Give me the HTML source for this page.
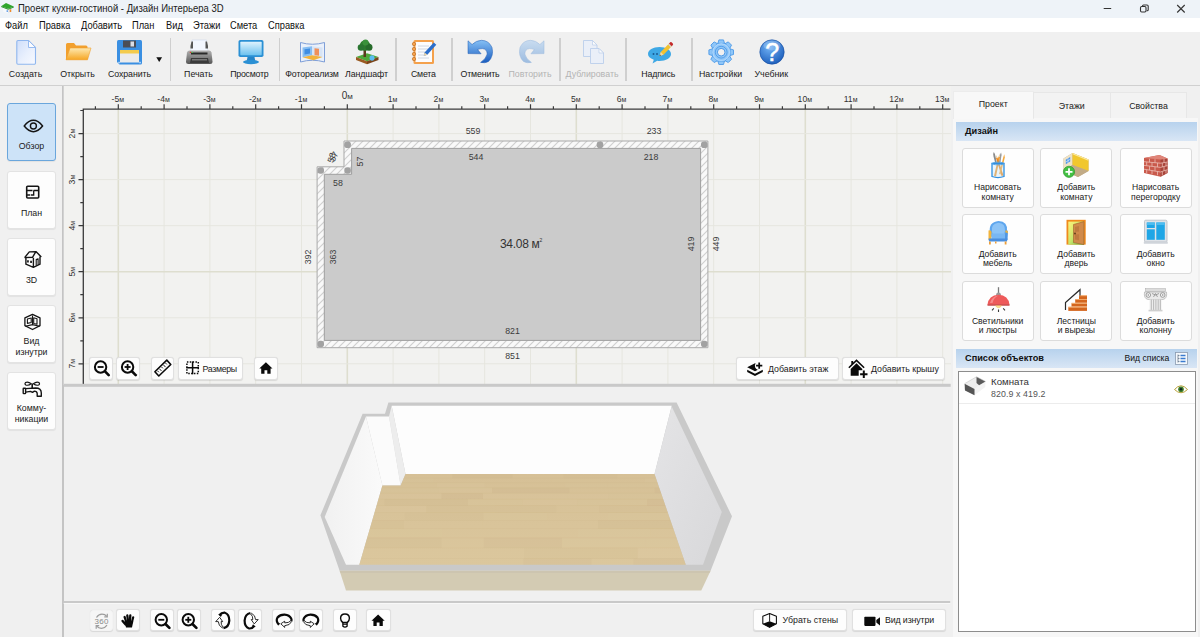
<!DOCTYPE html>
<html lang="ru"><head><meta charset="utf-8"><title>Дизайн Интерьера 3D</title>
<style>
html,body{margin:0;padding:0}
body{width:1200px;height:637px;overflow:hidden;position:relative;background:#f0f0f0;font-family:"Liberation Sans","DejaVu Sans",sans-serif;color:#1a1a1a;font-size:9px}
.abs{position:absolute}
#title{position:absolute;left:0;top:0;width:1200px;height:18px;background:#eef3f8}
#title .t{position:absolute;left:18px;top:2.800px;font-size:9.5px;line-height:12px;transform:scaleY(1.07);color:#222;white-space:nowrap}
#menu{position:absolute;left:0;top:17.700px;width:1200px;height:14.300px;background:#fff}
#menu span{position:absolute;top:1.900px;font-size:9.3px;line-height:12px;transform:scaleY(1.15);color:#111;white-space:nowrap}
#toolbar{position:absolute;left:0;top:32px;width:1200px;height:52.500px;background:#f0f0f0;border-bottom:1px solid #d0d0d0}
.tb{position:absolute;top:36.500px;width:70px;margin-left:-35px;text-align:center;font-size:8.8px;line-height:10px;color:#1a1a1a;white-space:nowrap}
.tb.dis{color:#b4b4b4}
.ico{position:absolute;top:5px;width:30px;height:30px;margin-left:-15px}
.sep{position:absolute;top:5.500px;width:1.5px;height:43px;background:#cfcfcf}

.sb{position:absolute;left:7px;width:47px;height:56px;border:1px solid #e3e3e3;border-radius:3px;background:#fdfdfd;box-shadow:0 1px 1px rgba(0,0,0,.06)}
.sb.act{background:#cde3f8;border-color:#6aa6dc}
.sb svg{position:absolute;left:50%;margin-left:-12px;width:24px;height:24px}
.sb .l{position:absolute;left:-4px;right:-4px;text-align:center;font-size:8.8px;line-height:11px;color:#1a1a1a}
#sideline{position:absolute;left:62.200px;top:86px;width:1.500px;height:551px;background:#c4c4c4}

#right{position:absolute;left:953.300px;top:117.500px;width:245px;height:519.500px;background:#f7f7f7}
.tab{position:absolute;top:92px;height:26px;background:#f3f3f3;border:1px solid #e7e7e7;border-bottom:none;box-sizing:border-box;text-align:center;font-size:8.8px;line-height:27px;color:#222}
.tab.act{top:90.500px;height:28px;background:#f8f8f8;border-color:#ececec;line-height:25px}
.hdr{position:absolute;left:956px;width:241.200px;height:19px;background:linear-gradient(#b7d2ed,#d9e6f5);font-weight:bold;font-size:9.2px;line-height:19px;color:#111}
.hdr span{position:absolute;left:9px;top:0}
.pb{position:absolute;width:70.300px;height:58px;border:1px solid #dcdcdc;border-radius:3px;background:#fefefe}
.pb .l{position:absolute;left:-3px;right:-3px;top:34.500px;text-align:center;font-size:8.6px;line-height:9.800px;color:#1a1a1a}
.pb svg{position:absolute;left:50%;margin-left:-15px;top:1.500px;width:30px;height:30px}
#list{position:absolute;left:958px;top:371px;width:235.500px;height:259px;border:1px solid #8d8d8d;background:#fff}

.btn{position:absolute;border:1px solid #e0e0e0;box-shadow:0 .6px 1px rgba(0,0,0,.10);border-radius:3px;background:#fdfdfd;box-sizing:content-box;font-size:8.800px;color:#1a1a1a;white-space:nowrap}
.btn svg{position:absolute}
.btn span{position:absolute;top:.6px}
</style></head><body>
<div id="title"><svg class="abs" style="left:0;top:0" width="16" height="16" viewBox="0 0 16 16"><path d="M3.200 7.500h8.600v4.300L8 13.200l-4.800-1.500z" fill="#f7f9fc"/><path d="M8 9.500l3.800-1.800v4.100L8 13.200z" fill="#e4e9f0"/><path d="M1.100 6.200L6 3.100l7.800 3.400L8.200 8.800z" fill="#2fa52c"/><path d="M1.100 6.200L8.200 8.800v.9L1.100 7.100z" fill="#1e8a1e"/><path d="M8.200 8.800l5.600-2.300v.9L8.200 9.700z" fill="#27962a"/><rect x="6.600" y="10.300" width="1.300" height="1.600" fill="#4a8fe0"/><rect x="9.700" y="9.300" width="1.500" height="2.700" fill="#f08a2a"/></svg><svg class="abs" style="left:1100px;top:0" width="100" height="18" viewBox="0 0 100 18" fill="none" stroke="#333" stroke-width="1"><path d="M3.700 8.500h7.500"/><rect x="40.500" y="6.500" width="5.500" height="5.500" rx="1.200" stroke-width="1.100"/><path d="M42.500 6.300v-.3q0-1 1-1h3.500q1.200 0 1.200 1.200v3.500q0 1-1 1h-.5" stroke-width="1.100"/><path d="M77.200 5l7.500 7.500M84.700 5l-7.500 7.500" stroke-width="1.100"/></svg><span class="t">Проект кухни-гостиной - Дизайн Интерьера 3D</span></div>
<div id="menu"><span style="left:5px">Файл</span><span style="left:39px">Правка</span><span style="left:81px">Добавить</span><span style="left:132px">План</span><span style="left:166px">Вид</span><span style="left:193px">Этажи</span><span style="left:230px">Смета</span><span style="left:268px">Справка</span></div>
<div id="toolbar"><svg class="abs" style="left:0;top:-32px" width="1200" height="90" viewBox="0 0 1200 90"><defs>
<linearGradient id="gN" x1="0" y1="0" x2="1" y2="1"><stop offset="0" stop-color="#cfdefa"/><stop offset=".55" stop-color="#e9f0fd"/><stop offset="1" stop-color="#f7f9ff"/></linearGradient>
<linearGradient id="gO" x1="0" y1="0" x2="0" y2="1"><stop offset="0" stop-color="#fee9b0"/><stop offset="1" stop-color="#f6a623"/></linearGradient>
<linearGradient id="gP" x1="0" y1="0" x2="0" y2="1"><stop offset="0" stop-color="#b2b2b2"/><stop offset="1" stop-color="#555"/></linearGradient>
<linearGradient id="gV" x1="0" y1="0" x2="0" y2="1"><stop offset="0" stop-color="#dff2fd"/><stop offset="1" stop-color="#6cc2ef"/></linearGradient>
<linearGradient id="gU" x1="0" y1="0" x2="0" y2="1"><stop offset="0" stop-color="#86c0f5"/><stop offset="1" stop-color="#1a5cbf"/></linearGradient>
<linearGradient id="gR" x1="0" y1="0" x2="0" y2="1"><stop offset="0" stop-color="#c9dcf0"/><stop offset="1" stop-color="#9dbce0"/></linearGradient>
<linearGradient id="gS" x1="0" y1="0" x2="0" y2="1"><stop offset="0" stop-color="#9ccdf8"/><stop offset="1" stop-color="#3d90e2"/></linearGradient>
<radialGradient id="gH" cx=".4" cy=".3" r=".8"><stop offset="0" stop-color="#72b3f6"/><stop offset="1" stop-color="#1456b6"/></radialGradient>
</defs><path d="M18 40.500h10.500l7 7v15.500a1.200 1.200 0 0 1-1.200 1.200H18a1.200 1.200 0 0 1-1.200-1.200V41.700a1.200 1.200 0 0 1 1.200-1.200z" fill="url(#gN)" stroke="#8fb6ee" stroke-width="1.100"/><path d="M28.500 40.500v7h7z" fill="#fbfcff" stroke="#8fb6ee" stroke-width=".9" stroke-linejoin="round"/><path d="M66 44.500a1.500 1.500 0 0 1 1.500-1.500h6.500l2 2.500h10a1.500 1.500 0 0 1 1.500 1.500v12.500H66z" fill="#f2a02e"/><path d="M70 48h21l-3.500 11.800H66z" fill="url(#gO)" stroke="#f0a02e" stroke-width=".6"/><path d="M117 41.500a1.500 1.500 0 0 1 1.500-1.500h22a1.500 1.500 0 0 1 1.500 1.500v21.500a1.500 1.500 0 0 1-1.500 1.500h-21l-2.500-2.500z" fill="#3a8fe2"/><rect x="123" y="40.500" width="13" height="7" fill="#4b4e57"/><rect x="130.500" y="41.500" width="3.500" height="5" fill="#d9dde6"/><rect x="120" y="50" width="19" height="12.500" fill="#ebebeb"/><rect x="120" y="50" width="19" height="3.500" fill="#f4cb4c"/><rect x="118.300" y="61.800" width="1.500" height="1.500" fill="#c4e2ff"/><rect x="139.300" y="61.800" width="1.500" height="1.500" fill="#c4e2ff"/><path d="M156.300 57.200h5.800l-2.900 4.800z" fill="#111"/><path d="M192 40h14.500l1.500 12h-17.500z" fill="#f2f6fe" stroke="#cfd9ec" stroke-width=".6"/><path d="M190.500 46l1 -4.500h1.500v7h-2.500zM208 46l-1-4.500h-1.500v7h2.500z" fill="#555"/><path d="M189.500 50.500h19.500q2 0 2.500 2l1 9q0 2.500-2.500 2.500h-21.500q-2.500 0-2.500-2.500l1-9q.5-2 2.500-2z" fill="url(#gP)"/><rect x="191" y="52.500" width="16.500" height="2" fill="#2a2a2a"/><path d="M191 58h17l1 5h-19z" fill="#3a3a3a"/><rect x="192" y="59" width="15" height="1.500" fill="#777"/><rect x="189.800" y="51.800" width="1.300" height="1.200" fill="#e8342a"/><rect x="191.600" y="51.800" width="1.300" height="1.200" fill="#4fc44f"/><rect x="238.500" y="40" width="25" height="17" rx="1.800" fill="#2b90d4"/><rect x="240.300" y="41.800" width="21.400" height="13.400" rx=".8" fill="url(#gV)"/><path d="M247.500 57h7l.8 4h-8.600z" fill="#2484c8"/><ellipse cx="251" cy="62" rx="8" ry="2.200" fill="#2b90d4"/><path d="M300.500 42.500q12 3.500 24 0v19.500q-12-3.500-24 0z" fill="#eaf0fa" stroke="#7f9fd8" stroke-width="1"/><path d="M302.500 47.500l9.500 -1.200v9l-9.500 2z" fill="#86bdf2"/><path d="M312 46.300l10.500 1.200v9.500l-10.500-1.700z" fill="#d7e4f6"/><path d="M302.500 57.300l9.500-2 10.500 1.700-9 3.200z" fill="#f2b23c"/><path d="M304.500 49.200l5.500-.6v5l-5.500.8z" fill="#3f8de2"/><path d="M314.500 48.200l4.500.6v7l-4.500-.6z" fill="#f0905a"/><path d="M356 57l11-3.800 11.500 3.800-11.500 4.200z" fill="#4fa83a"/><path d="M356 57l11 4.200v3l-11-4.200z" fill="#9a5a22"/><path d="M378.500 57l-11.500 4.200v3l11.500-4.200z" fill="#7a4318"/><ellipse cx="372" cy="58" rx="2.500" ry="2.800" fill="#5bbcf0"/><rect x="363.500" y="50" width="2.500" height="7" fill="#5c3a1c"/><circle cx="365" cy="45.500" r="5.200" fill="#2e7d2e"/><circle cx="361" cy="47.500" r="3.300" fill="#2a7530"/><circle cx="369" cy="47.300" r="3.500" fill="#266b2a"/><circle cx="365.500" cy="42.500" r="3" fill="#3a913a"/><rect x="413.500" y="40" width="20.500" height="24" rx="1.500" fill="#f4a14c"/><rect x="415.500" y="42" width="16.500" height="20" fill="#fcfcfd"/><path d="M418 46h11M418 49h11M418 52h8M418 55h7M418 58h11" stroke="#c4cedb" stroke-width=".8"/><g fill="#f4a14c" stroke="#b8681c" stroke-width=".6"><circle cx="414" cy="44" r="1.700"/><circle cx="414" cy="49" r="1.700"/><circle cx="414" cy="54" r="1.700"/><circle cx="414" cy="59" r="1.700"/></g><path d="M433.800 42.500l2.500 2.300-9 10-3.500 1.300.8-3.600z" fill="#2c6fcc"/><path d="M424.600 52.500l2.700 2.300-3.500 1.300z" fill="#f1d9aa"/><path d="M468 40.800L472.100 44.500Q476 40.500 481.500 40.300Q489 40.500 492 47.500Q494 56 488.500 61.500Q485 63.500 480.600 62.400Q486 59 487.200 54Q487 49 482.500 48.600Q480 48.500 477.600 49.600L481.100 53.800L468 53.600Z" fill="url(#gU)" stroke="#1b58b2" stroke-width=".5"/><g transform="translate(1012 0) scale(-1 1)"><path d="M468 40.800L472.100 44.500Q476 40.500 481.500 40.300Q489 40.500 492 47.500Q494 56 488.500 61.500Q485 63.500 480.600 62.400Q486 59 487.200 54Q487 49 482.500 48.600Q480 48.500 477.600 49.600L481.100 53.800L468 53.600Z" fill="url(#gR)" stroke="#9bb8dc" stroke-width=".5"/></g><g opacity=".75"><path d="M583.500 40.500h9l4.500 4.500v11.500h-13.500z" fill="#e8effb" stroke="#a9c3ea" stroke-width=".9"/><path d="M592.500 40.500v4.500h4.500z" fill="#fff" stroke="#a9c3ea" stroke-width=".7"/><path d="M590.500 48.500h8.500l4.500 4.500v10.500h-13z" fill="#e8effb" stroke="#a9c3ea" stroke-width=".9"/><path d="M599 48.500v4.500h4.500z" fill="#fff" stroke="#a9c3ea" stroke-width=".7"/></g><path d="M659.500 47c6.500 0 11.500 3 11.500 7s-5 7-11.500 7q-1.200 0-2.300-.2l-4.700 2.700 1.300-3.800q-5.800-2-5.800-5.700c0-4 5-7 11.500-7z" fill="#3ea8e5"/><circle cx="653.500" cy="54" r="1" fill="#1a5c94"/><circle cx="657" cy="54" r="1" fill="#1a5c94"/><path d="M659.500 56l1.300-4 8.200-8.500 2.700 2.700-8.200 8.500z" fill="#f4c22e"/><path d="M659.500 56l1.300-4 2.700 2.700z" fill="#f0d9a8"/><path d="M659.500 56l.5-1.500 1 1z" fill="#333"/><path d="M668 44.500l1-1 2.700 2.700-1 1z" fill="#d4d4d4"/><path d="M669 43.500l1.200-1.300q.7-.5 1.400.1l1.200 1.200q.6.700.1 1.400l-1.200 1.300z" fill="#c42a2a"/><g transform="translate(721.200 52.200)"><circle r="9.500" fill="#8fc6f8" stroke="#4d9ae8" stroke-width=".9"/><g fill="#8fc6f8" stroke="#4d9ae8" stroke-width=".9" stroke-linejoin="round"><path d="M-2.300-12.300h4.600l1 3.500h-6.600z" transform="rotate(0)"/><path d="M-2.300-12.300h4.600l1 3.500h-6.600z" transform="rotate(45)"/><path d="M-2.300-12.300h4.600l1 3.500h-6.600z" transform="rotate(90)"/><path d="M-2.300-12.300h4.600l1 3.500h-6.600z" transform="rotate(135)"/><path d="M-2.300-12.300h4.600l1 3.500h-6.600z" transform="rotate(180)"/><path d="M-2.300-12.300h4.600l1 3.500h-6.600z" transform="rotate(225)"/><path d="M-2.300-12.300h4.600l1 3.500h-6.600z" transform="rotate(270)"/><path d="M-2.300-12.300h4.600l1 3.500h-6.600z" transform="rotate(315)"/></g><circle r="9" fill="#8fc6f8"/><circle r="8.300" fill="none" stroke="#b4dafc" stroke-width="1.200" opacity=".8"/><circle r="5.900" fill="none" stroke="#4d9ae8" stroke-width=".9"/><circle r="3.800" fill="#f0f0f0" stroke="#4d9ae8" stroke-width="1"/></g><circle cx="772" cy="52" r="12.200" fill="url(#gH)" stroke="#124a9e" stroke-width=".6"/><ellipse cx="772" cy="45.500" rx="8.500" ry="5" fill="#fff" opacity=".2"/><text x="772.300" y="60.800" text-anchor="middle" font-family="Liberation Sans, sans-serif" font-size="25" fill="#fff" stroke="#fff" stroke-width=".5">?</text></svg><div class="tb" style="left:25.5px">Создать</div><div class="tb" style="left:77.5px">Открыть</div><div class="tb" style="left:129.5px;letter-spacing:-0.1px">Сохранить</div><div class="tb" style="left:198.5px">Печать</div><div class="tb" style="left:249.3px;letter-spacing:-0.25px">Просмотр</div><div class="tb" style="left:312px;letter-spacing:-0.15px">Фотореализм</div><div class="tb" style="left:366.5px;letter-spacing:-0.1px">Ландшафт</div><div class="tb" style="left:423.3px;letter-spacing:-0.25px">Смета</div><div class="tb" style="left:480px;letter-spacing:-0.15px">Отменить</div><div class="tb dis" style="left:530px">Повторить</div><div class="tb dis" style="left:592px">Дублировать</div><div class="tb" style="left:658.3px;letter-spacing:-0.15px">Надпись</div><div class="tb" style="left:720.6px">Настройки</div><div class="tb" style="left:771.3px">Учебник</div><div class="sep" style="left:169.5px"></div><div class="sep" style="left:278.500px"></div><div class="sep" style="left:395.2px"></div><div class="sep" style="left:451px"></div><div class="sep" style="left:559px"></div><div class="sep" style="left:625px"></div><div class="sep" style="left:691px"></div></div>
<div id="sideline"></div>
<div class="sb act" style="top:103px"><svg style="top:10px" viewBox="0 0 24 24" fill="none" stroke="#151515" stroke-width="1.500"><path d="M4.200 12q4.600-5.700 9.200-5.700t9.200 5.700q-4.600 5.700-9.200 5.700t-9.200-5.700z" stroke-linejoin="round"/><circle cx="13.400" cy="12" r="3" stroke-width="1.400"/></svg><div class="l" style="top:37px">Обзор</div></div>
<div class="sb" style="top:171px"><svg style="top:10px" viewBox="0 0 24 24" fill="none" stroke="#151515" stroke-width="1.600"><rect x="6.700" y="4.300" width="12" height="11.700" rx="1"/><path d="M7 8.500h5.500M13.500 8.500h5M13.700 8.500v4.500h-3M7 13h3" stroke-width="1.300"/></svg><div class="l" style="top:36px">План</div></div>
<div class="sb" style="top:238px"><svg style="top:9px" viewBox="0 0 24 24" fill="none" stroke="#151515" stroke-width="1.400" stroke-linejoin="round"><path d="M4.600 9.600L9.300 3.900L15.900 3.600L21.300 8.900M15.900 3.600L12.500 9.300L4.600 9.600" /><path d="M5.900 10V16.200L13.400 19.300L20 16.200V8.500M13.400 9.800V19.300" /><path d="M7.100 12.200h1.700v2.200h-1.700zM10.200 12.800h1.700v2.300h-1.700z" fill="#151515" stroke="none"/><path d="M16.200 17.500V11.500l1.900-.8v6" stroke-width="1.100"/></svg><div class="l" style="top:36px">3D</div></div>
<div class="sb" style="top:305px"><svg style="top:6px" viewBox="0 0 24 24" fill="none" stroke="#151515" stroke-width="1.300" stroke-linejoin="round"><path d="M12.500 2.400L20 5.900V13.700L12.500 17.500L4.900 13.700V5.900Z"/><path d="M12.500 3.500V12.600M5.300 14.200L12.500 12.600L19.700 14.200" stroke-width="1.100"/><path d="M7.400 7l3.800-1v4.500l-3.800 .9zM13.700 5.800l3.300 .9v5.600l-3.300-.8z" stroke-width="1.100"/></svg><div class="l" style="top:30px">Вид<br>изнутри</div></div>
<div class="sb" style="top:372px"><svg style="top:5px" viewBox="0 0 24 24" fill="none" stroke="#151515" stroke-width="1.400" stroke-linejoin="round"><path d="M5.600 10.600L15.600 10Q21.300 10 21.300 15V18.200H17.200V15.500Q17 13.200 14.400 13.100L12.500 14.300L10.500 13.400L5.600 14.100"/><rect x="3.200" y="10.200" width="2.400" height="5.400" rx=".6"/><path d="M12.200 5.500V10" stroke-width="1.600"/><path d="M11.200 5.800Q8 3.200 5.500 4.600Q4.300 6 5.800 7Q8.500 7.800 11.200 5.800ZM13.400 5.800Q16.500 3.200 19 4.600Q20.200 6 18.700 7Q16 7.800 13.400 5.800Z" stroke-width="1.200"/></svg><div class="l" style="top:30px">Комму-<br>никации</div></div>
<svg class="abs" style="left:0;top:0" width="1200" height="637" viewBox="0 0 1200 637" font-family="Liberation Sans, DejaVu Sans, sans-serif">
<defs><pattern id="hatch" width="7" height="7" patternUnits="userSpaceOnUse"><rect width="7" height="7" fill="#f9f9f9"/><path d="M-1 8L8 -1M-1 1L1 -1M6 8L8 6" stroke="#d0d0d0" stroke-width="1.150"/></pattern><clipPath id="planclip"><rect x="84" y="109" width="867" height="276"/></clipPath><linearGradient id="gRW" x1="0" y1="0" x2="1" y2="1"><stop offset="0" stop-color="#e4e4e6"/><stop offset="1" stop-color="#d8d8da"/></linearGradient><linearGradient id="gLW" x1="0" y1="0" x2="1" y2="0"><stop offset="0" stop-color="#f1f1f1"/><stop offset="1" stop-color="#fafafa"/></linearGradient><linearGradient id="gFl" x1="0" y1="0" x2="0" y2="1"><stop offset="0" stop-color="#d6c096"/><stop offset="1" stop-color="#dbc79d"/></linearGradient></defs>
<rect x="63.700" y="86" width="887" height="299" fill="#f2f2f0"/>
<g clip-path="url(#planclip)">
<line x1="72.5" y1="109" x2="72.5" y2="385" stroke="#e6e6df" stroke-width="1"/>
<line x1="118.3" y1="109" x2="118.3" y2="385" stroke="#dedecf" stroke-width="1.600"/>
<line x1="164.1" y1="109" x2="164.1" y2="385" stroke="#e6e6df" stroke-width="1"/>
<line x1="209.9" y1="109" x2="209.9" y2="385" stroke="#e6e6df" stroke-width="1"/>
<line x1="255.7" y1="109" x2="255.7" y2="385" stroke="#e6e6df" stroke-width="1"/>
<line x1="301.5" y1="109" x2="301.5" y2="385" stroke="#e6e6df" stroke-width="1"/>
<line x1="347.3" y1="109" x2="347.3" y2="385" stroke="#dedecf" stroke-width="1.600"/>
<line x1="393.1" y1="109" x2="393.1" y2="385" stroke="#e6e6df" stroke-width="1"/>
<line x1="438.9" y1="109" x2="438.9" y2="385" stroke="#e6e6df" stroke-width="1"/>
<line x1="484.7" y1="109" x2="484.7" y2="385" stroke="#e6e6df" stroke-width="1"/>
<line x1="530.5" y1="109" x2="530.5" y2="385" stroke="#e6e6df" stroke-width="1"/>
<line x1="576.3" y1="109" x2="576.3" y2="385" stroke="#dedecf" stroke-width="1.600"/>
<line x1="622.1" y1="109" x2="622.1" y2="385" stroke="#e6e6df" stroke-width="1"/>
<line x1="667.9" y1="109" x2="667.9" y2="385" stroke="#e6e6df" stroke-width="1"/>
<line x1="713.7" y1="109" x2="713.7" y2="385" stroke="#e6e6df" stroke-width="1"/>
<line x1="759.5" y1="109" x2="759.5" y2="385" stroke="#e6e6df" stroke-width="1"/>
<line x1="805.3" y1="109" x2="805.3" y2="385" stroke="#dedecf" stroke-width="1.600"/>
<line x1="851.1" y1="109" x2="851.1" y2="385" stroke="#e6e6df" stroke-width="1"/>
<line x1="896.9" y1="109" x2="896.9" y2="385" stroke="#e6e6df" stroke-width="1"/>
<line x1="942.7" y1="109" x2="942.7" y2="385" stroke="#e6e6df" stroke-width="1"/>
<line x1="84" y1="133.6" x2="951" y2="133.6" stroke="#e6e6df" stroke-width="1"/>
<line x1="84" y1="179.6" x2="951" y2="179.6" stroke="#e6e6df" stroke-width="1"/>
<line x1="84" y1="225.7" x2="951" y2="225.7" stroke="#e6e6df" stroke-width="1"/>
<line x1="84" y1="271.7" x2="951" y2="271.7" stroke="#dedecf" stroke-width="1.600"/>
<line x1="84" y1="317.8" x2="951" y2="317.8" stroke="#e6e6df" stroke-width="1"/>
<line x1="84" y1="363.8" x2="951" y2="363.8" stroke="#e6e6df" stroke-width="1"/>
</g>
<path d="M83.300 384V109.100H950.500" fill="none" stroke="#3a3a3a" stroke-width="1.300"/>
<path d="M95.4 106.300V109M118.3 104.300V109M141.2 106.300V109M164.1 104.300V109M187.0 106.300V109M209.9 104.300V109M232.8 106.300V109M255.7 104.300V109M278.6 106.300V109M301.5 104.300V109M324.4 106.300V109M347.3 104.300V109M370.2 106.300V109M393.1 104.300V109M416.0 106.300V109M438.9 104.300V109M461.8 106.300V109M484.7 104.300V109M507.6 106.300V109M530.5 104.300V109M553.4 106.300V109M576.3 104.300V109M599.2 106.300V109M622.1 104.300V109M645.0 106.300V109M667.9 104.300V109M690.8 106.300V109M713.7 104.300V109M736.6 106.300V109M759.5 104.300V109M782.4 106.300V109M805.3 104.300V109M828.2 106.300V109M851.1 104.300V109M874.0 106.300V109M896.9 104.300V109M919.8 106.300V109M942.7 104.300V109M80.300 110.5H83.300M78.500 133.6H83.300M80.300 156.6H83.300M78.500 179.6H83.300M80.300 202.6H83.300M78.500 225.7H83.300M80.300 248.7H83.300M78.500 271.7H83.300M80.300 294.7H83.300M78.500 317.8H83.300M80.300 340.8H83.300M78.500 363.8H83.300" stroke="#3a3a3a" stroke-width="1.200" fill="none"/>
<g font-size="8.600" fill="#333" text-anchor="middle">
<text x="117.8" y="102"><tspan>-5</tspan><tspan font-size="7">м</tspan></text>
<text x="163.6" y="102"><tspan>-4</tspan><tspan font-size="7">м</tspan></text>
<text x="209.4" y="102"><tspan>-3</tspan><tspan font-size="7">м</tspan></text>
<text x="255.2" y="102"><tspan>-2</tspan><tspan font-size="7">м</tspan></text>
<text x="301.0" y="102"><tspan>-1</tspan><tspan font-size="7">м</tspan></text>
<text x="347.3" y="98.500" font-size="10">0<tspan font-size="8">м</tspan></text>
<text x="392.6" y="102"><tspan>1</tspan><tspan font-size="7">м</tspan></text>
<text x="438.4" y="102"><tspan>2</tspan><tspan font-size="7">м</tspan></text>
<text x="484.2" y="102"><tspan>3</tspan><tspan font-size="7">м</tspan></text>
<text x="530.0" y="102"><tspan>4</tspan><tspan font-size="7">м</tspan></text>
<text x="575.8" y="102"><tspan>5</tspan><tspan font-size="7">м</tspan></text>
<text x="621.6" y="102"><tspan>6</tspan><tspan font-size="7">м</tspan></text>
<text x="667.4" y="102"><tspan>7</tspan><tspan font-size="7">м</tspan></text>
<text x="713.2" y="102"><tspan>8</tspan><tspan font-size="7">м</tspan></text>
<text x="759.0" y="102"><tspan>9</tspan><tspan font-size="7">м</tspan></text>
<text x="804.8" y="102"><tspan>10</tspan><tspan font-size="7">м</tspan></text>
<text x="850.6" y="102"><tspan>11</tspan><tspan font-size="7">м</tspan></text>
<text x="896.4" y="102"><tspan>12</tspan><tspan font-size="7">м</tspan></text>
<text x="942.2" y="102"><tspan>13</tspan><tspan font-size="7">м</tspan></text>
<text transform="translate(75.200 133.6) rotate(-90)"><tspan>2</tspan><tspan font-size="7">м</tspan></text>
<text transform="translate(75.200 179.6) rotate(-90)"><tspan>3</tspan><tspan font-size="7">м</tspan></text>
<text transform="translate(75.200 225.7) rotate(-90)"><tspan>4</tspan><tspan font-size="7">м</tspan></text>
<text transform="translate(75.200 271.7) rotate(-90)"><tspan>5</tspan><tspan font-size="7">м</tspan></text>
<text transform="translate(75.200 317.8) rotate(-90)"><tspan>6</tspan><tspan font-size="7">м</tspan></text>
<text transform="translate(75.200 363.8) rotate(-90)"><tspan>7</tspan><tspan font-size="7">м</tspan></text>
</g>
<path d="M344 141H707.900V347.700H317.100V166.800H344Z" fill="url(#hatch)" stroke="#a9a9a9" stroke-width="1"/>
<path d="M351.600 148.400H700.600V340.400H324.300V174.300H351.600Z" fill="#cbcbcb" stroke="#9f9f9f" stroke-width="1"/>
<rect x="344.3" y="141.4" width="6.600" height="6.600" rx="2.800" fill="#a2a2a2"/><rect x="596.7" y="141.4" width="6.600" height="6.600" rx="2.800" fill="#a2a2a2"/><rect x="701.0" y="141.4" width="6.600" height="6.600" rx="2.800" fill="#a2a2a2"/><rect x="317.4" y="167.2" width="6.600" height="6.600" rx="2.800" fill="#a2a2a2"/><rect x="344.3" y="167.2" width="6.600" height="6.600" rx="2.800" fill="#a2a2a2"/><rect x="701.0" y="340.7" width="6.600" height="6.600" rx="2.800" fill="#a2a2a2"/><rect x="317.4" y="340.7" width="6.600" height="6.600" rx="2.800" fill="#a2a2a2"/>
<g font-size="8.800" fill="#3c3c3c" text-anchor="middle">
<text x="473" y="134">559</text>
<text x="654" y="134">233</text>
<text x="476" y="160">544</text>
<text x="651" y="160">218</text>
<text x="338" y="186">58</text>
<text x="512.5" y="333.5">821</text>
<text x="512.5" y="358.5">851</text>
<text transform="translate(362.600 161.500) rotate(-90)">57</text>
<text transform="translate(336.500 158) rotate(-62)">57</text>
<text transform="translate(334.500 158.500) rotate(-72)">58</text>
<text transform="translate(311 257) rotate(-90)">392</text>
<text transform="translate(336 257) rotate(-90)">363</text>
<text transform="translate(694 244) rotate(-90)">419</text>
<text transform="translate(719.200 244) rotate(-90)">449</text>
</g>
<text x="521" y="248" font-size="12" fill="#333" text-anchor="middle" letter-spacing="-.3">34.08 м<tspan font-size="5" dy="-6">2</tspan></text>
<rect x="63.700" y="383.800" width="887" height="3" fill="#c9c9c9"/>
<path d="M388.400 402.500H676.600L732 516.300L710.600 570.700H339.600L320.400 515.300L362.600 413.700H385Z" fill="#c9c9c9"/>
<path d="M391.700 405.800H671.700L654.500 474H405.500Z" fill="#fdfdfd"/>
<path d="M389 416.400L391.700 405.800L405.500 474L400.600 485.600Z" fill="#ededed"/>
<path d="M366 416.400H389L400.600 485.600H382.400Z" fill="#fbfbfb"/>
<path d="M366 416.400L324.700 517L346 564.700H359.300L382.400 485.600Z" fill="url(#gLW)"/>
<path d="M671.700 406.500L721.800 512L703 564.700H685.800L654.500 474Z" fill="url(#gRW)"/>
<path d="M405.500 474H654.500L685.800 564.700H359.300L382.400 485.600H400.600Z" fill="url(#gFl)"/><clipPath id="flclip"><path d="M405.500 474H654.500L685.800 564.700H359.300L382.400 485.600H400.600Z"/></clipPath><g clip-path="url(#flclip)"><rect x="359.4" y="474.0" width="45.2" height="4.2" fill="#fff6dc" opacity="0.015"/><rect x="452.3" y="474.0" width="60.1" height="4.2" fill="#8a6a30" opacity="0.030"/><rect x="563.5" y="474.0" width="53.8" height="4.2" fill="#8a6a30" opacity="0.021"/><rect x="670.4" y="474.0" width="80.0" height="4.2" fill="#8a6a30" opacity="0.021"/><path d="M350 478.2H700" stroke="#b89c66" stroke-width=".5" opacity="0.132"/><rect x="362.4" y="478.2" width="71.3" height="4.6" fill="#fff6dc" opacity="0.024"/><rect x="551.7" y="478.2" width="48.9" height="4.6" fill="#fff6dc" opacity="0.015"/><rect x="645.0" y="478.2" width="40.4" height="4.6" fill="#fff6dc" opacity="0.030"/><path d="M350 482.8H700" stroke="#b89c66" stroke-width=".5" opacity="0.132"/><rect x="366.6" y="482.8" width="69.9" height="5.0" fill="#fff6dc" opacity="0.015"/><rect x="436.5" y="482.8" width="48.1" height="5.0" fill="#fff6dc" opacity="0.030"/><rect x="565.2" y="482.8" width="42.3" height="5.0" fill="#fff6dc" opacity="0.024"/><rect x="607.5" y="482.8" width="65.9" height="5.0" fill="#fff6dc" opacity="0.024"/><rect x="673.5" y="482.8" width="75.0" height="5.0" fill="#8a6a30" opacity="0.021"/><path d="M350 487.8H700" stroke="#b89c66" stroke-width=".5" opacity="0.132"/><rect x="352.7" y="487.8" width="85.7" height="5.4" fill="#fff6dc" opacity="0.024"/><rect x="438.3" y="487.8" width="53.8" height="5.4" fill="#fff6dc" opacity="0.030"/><rect x="492.1" y="487.8" width="77.3" height="5.4" fill="#8a6a30" opacity="0.030"/><rect x="654.7" y="487.8" width="75.4" height="5.4" fill="#8a6a30" opacity="0.030"/><path d="M350 493.2H700" stroke="#b89c66" stroke-width=".5" opacity="0.132"/><rect x="354.9" y="493.2" width="86.7" height="5.9" fill="#fff6dc" opacity="0.030"/><rect x="441.6" y="493.2" width="41.3" height="5.9" fill="#8a6a30" opacity="0.030"/><rect x="482.9" y="493.2" width="84.8" height="5.9" fill="#fff6dc" opacity="0.030"/><rect x="567.7" y="493.2" width="40.9" height="5.9" fill="#fff6dc" opacity="0.030"/><rect x="608.6" y="493.2" width="88.3" height="5.9" fill="#fff6dc" opacity="0.024"/><path d="M350 499.1H700" stroke="#b89c66" stroke-width=".5" opacity="0.132"/><rect x="384.5" y="499.1" width="83.5" height="6.5" fill="#8a6a30" opacity="0.024"/><rect x="467.9" y="499.1" width="54.7" height="6.5" fill="#fff6dc" opacity="0.021"/><rect x="522.6" y="499.1" width="54.6" height="6.5" fill="#fff6dc" opacity="0.030"/><rect x="577.2" y="499.1" width="69.9" height="6.5" fill="#fff6dc" opacity="0.021"/><rect x="647.1" y="499.1" width="68.7" height="6.5" fill="#8a6a30" opacity="0.030"/><path d="M350 505.6H700" stroke="#b89c66" stroke-width=".5" opacity="0.132"/><rect x="368.2" y="505.6" width="58.3" height="7.0" fill="#fff6dc" opacity="0.030"/><rect x="426.5" y="505.6" width="68.6" height="7.0" fill="#8a6a30" opacity="0.015"/><rect x="495.0" y="505.6" width="61.2" height="7.0" fill="#8a6a30" opacity="0.021"/><rect x="599.2" y="505.6" width="69.8" height="7.0" fill="#8a6a30" opacity="0.021"/><path d="M350 512.6H700" stroke="#b89c66" stroke-width=".5" opacity="0.132"/><rect x="404.6" y="512.6" width="78.7" height="7.7" fill="#8a6a30" opacity="0.015"/><rect x="483.3" y="512.6" width="63.9" height="7.7" fill="#fff6dc" opacity="0.021"/><rect x="607.7" y="512.6" width="61.1" height="7.7" fill="#fff6dc" opacity="0.021"/><rect x="668.8" y="512.6" width="81.6" height="7.7" fill="#8a6a30" opacity="0.015"/><path d="M350 520.3H700" stroke="#b89c66" stroke-width=".5" opacity="0.132"/><rect x="351.3" y="520.3" width="52.7" height="8.4" fill="#8a6a30" opacity="0.021"/><rect x="404.0" y="520.3" width="78.6" height="8.4" fill="#fff6dc" opacity="0.015"/><rect x="598.0" y="520.3" width="88.1" height="8.4" fill="#8a6a30" opacity="0.024"/><path d="M350 528.7H700" stroke="#b89c66" stroke-width=".5" opacity="0.132"/><rect x="358.4" y="528.7" width="83.7" height="9.1" fill="#fff6dc" opacity="0.021"/><rect x="442.1" y="528.7" width="54.8" height="9.1" fill="#fff6dc" opacity="0.015"/><rect x="577.7" y="528.7" width="72.7" height="9.1" fill="#fff6dc" opacity="0.024"/><rect x="650.4" y="528.7" width="56.9" height="9.1" fill="#fff6dc" opacity="0.015"/><path d="M350 537.8H700" stroke="#b89c66" stroke-width=".5" opacity="0.132"/><rect x="353.0" y="537.8" width="88.6" height="9.9" fill="#8a6a30" opacity="0.024"/><rect x="483.8" y="537.8" width="78.3" height="9.9" fill="#8a6a30" opacity="0.030"/><rect x="562.1" y="537.8" width="83.5" height="9.9" fill="#fff6dc" opacity="0.024"/><rect x="645.6" y="537.8" width="68.5" height="9.9" fill="#fff6dc" opacity="0.024"/><path d="M350 547.8H700" stroke="#b89c66" stroke-width=".5" opacity="0.132"/><rect x="524.1" y="547.8" width="45.8" height="10.8" fill="#8a6a30" opacity="0.015"/><rect x="569.9" y="547.8" width="67.5" height="10.8" fill="#8a6a30" opacity="0.021"/><rect x="637.5" y="547.8" width="73.6" height="10.8" fill="#fff6dc" opacity="0.030"/><path d="M350 558.6H700" stroke="#b89c66" stroke-width=".5" opacity="0.132"/><rect x="523.4" y="558.6" width="68.0" height="11.8" fill="#8a6a30" opacity="0.030"/><rect x="633.5" y="558.6" width="54.8" height="11.8" fill="#8a6a30" opacity="0.030"/><path d="M350 570.4H700" stroke="#b89c66" stroke-width=".5" opacity="0.132"/></g>
<path d="M339.600 570.700H710.600L701.300 590.500H346Z" fill="#d3cbb3"/><path d="M339.600 570.700H710.600L709.600 573H340.400Z" fill="#c9c2ae" opacity=".6"/>
<rect x="63.700" y="601" width="886.500" height="2" fill="#c9c9c9"/><rect x="63.700" y="603" width="886.500" height="1" fill="#f8f8f8"/>
</svg>
<!--VIEW3D-->
<div class="btn" style="left:88.6px;top:357.1px;width:22.2px;height:20.5px;"><svg style="left:-1px;top:-1px" width="24.2" height="22.5" viewBox="0 0 24.2 22.5"><circle cx="11.6" cy="10" r="5.700" fill="none" stroke="#0a0a0a" stroke-width="2"/><path d="M16.0 14.4l3.700 3.700" stroke="#0a0a0a" stroke-width="2.700" stroke-linecap="round"/><path d="M8.6 10h6" stroke="#0a0a0a" stroke-width="1.800"/></svg></div><div class="btn" style="left:116.0px;top:357.1px;width:22.2px;height:20.5px;"><svg style="left:-1px;top:-1px" width="24.2" height="22.5" viewBox="0 0 24.2 22.5"><circle cx="11.6" cy="10" r="5.700" fill="none" stroke="#0a0a0a" stroke-width="2"/><path d="M16.0 14.4l3.700 3.700" stroke="#0a0a0a" stroke-width="2.700" stroke-linecap="round"/><path d="M8.6 10h6" stroke="#0a0a0a" stroke-width="1.800"/><path d="M11.6 7.0v6" stroke="#0a0a0a" stroke-width="1.800"/></svg></div><div class="btn" style="left:150.7px;top:357.1px;width:21.7px;height:20.5px;"><svg style="left:-1px;top:-1px" width="23.7" height="22.5" viewBox="0 0 23.7 22.5"><path d="M3.900 14.700L15.800 3.100L19.800 7.500L7.800 19Z" fill="none" stroke="#0a0a0a" stroke-width="1.600" stroke-linejoin="round"/><path d="M6.500 13.800l1.300 1.400M8.500 11.800l2 2.200M10.500 9.900l1.300 1.400M12.500 7.900l2 2.200M14.500 6l1.300 1.400" stroke="#0a0a0a" stroke-width=".9"/></svg></div><div class="btn" style="left:177.7px;top:357.1px;width:63.6px;height:20.5px"><svg style="left:-1px;top:-1px" width="65.6" height="22.5" viewBox="0 0 65.6 22.5"><rect x="8.900" y="5.100" width="11.400" height="11.400" fill="none" stroke="#0a0a0a" stroke-width="1.500" stroke-dasharray="1.500 1.350"/><path d="M14.600 4.400v12.800M8.200 10.800h12.800" stroke="#0a0a0a" stroke-width="1.500"/></svg><span style="left:23.9px;line-height:21.1px;letter-spacing:-.35px">Размеры</span></div><div class="btn" style="left:253.8px;top:357.1px;width:21.9px;height:20.5px;"><svg style="left:-1px;top:-1px" width="23.9" height="22.5" viewBox="0 0 23.9 22.5"><path d="M11.9 5.2l6.600 6.200h-1.900v5.400h-3.300v-3.600h-2.800v3.600h-3.300v-5.400h-1.900z" fill="#0a0a0a"/></svg></div><div class="btn" style="left:735.9px;top:357.1px;width:100.7px;height:20.5px"><svg style="left:-1px;top:-1px" width="102.7" height="22.5" viewBox="0 0 102.7 22.5"><path d="M19 6.200l7.800 4L19 14.200l-7.800-4z" fill="#0a0a0a"/><path d="M11.200 12.800L19 16.800l7.800-4v2.200L19 19l-7.800-4z" fill="#0a0a0a"/><circle cx="23.200" cy="8.700" r="4.300" fill="#fdfdfd"/><path d="M23.200 5.600v6.200M20.100 8.700h6.200" stroke="#0a0a0a" stroke-width="1.700"/></svg><span style="left:31.1px;line-height:21.1px">Добавить этаж</span></div><div class="btn" style="left:842.3px;top:357.1px;width:100.7px;height:20.5px"><svg style="left:-1px;top:-1px" width="102.7" height="22.5" viewBox="0 0 102.7 22.5"><path d="M14.500 2.300L22.700 10.200l-1.100 1.100-7.100-6.900-7.100 6.900-1.100-1.100 3-2.900V4h1.900v1.500z" fill="#0a0a0a"/><path d="M14.500 6.300l5.800 5.600v1.300h-3.600v5.500H8.700v-6.800z" fill="#0a0a0a"/><path d="M21.800 13.500v7.400M18.100 17.200h7.400" stroke="#0a0a0a" stroke-width="2"/></svg><span style="left:27.7px;line-height:21.1px">Добавить крышу</span></div><div class="btn" style="left:89.9px;top:609.5px;width:20.9px;height:19.5px;border-color:#f3f3f3;background:#f6f6f6"><svg style="left:-1px;top:-1px" width="22.9" height="21.5" viewBox="0 0 22.9 21.5"><g opacity=".85" fill="none" stroke="#8e8e8e"><path d="M6.500 7.500q2-3.300 5.500-3.300 3 0 4.800 2.200M17 15q-2 3.300-5.500 3.300-3 0-4.800-2.200" stroke-width="1.200"/><path d="M17.300 3.800v3h-3M6.200 18.700v-3h3" stroke-width="1.200"/></g><text x="11.700" y="13.800" text-anchor="middle" font-size="8" font-family="Liberation Sans, sans-serif" fill="#8a8a8a" letter-spacing=".3">360</text></svg></div><div class="btn" style="left:115.6px;top:608.9px;width:22.7px;height:20.6px;"><svg style="left:-1px;top:-1px" width="24.7" height="22.6" viewBox="0 0 24.7 22.6"><g stroke="#0a0a0a" stroke-linecap="round" fill="none"><path d="M8.600 8l1.800 5.500" stroke-width="2.300"/><path d="M11.300 6.400l.8 6" stroke-width="2.300"/><path d="M14.300 6.500l-.4 6" stroke-width="2.300"/><path d="M17.200 8.300l-1.300 5" stroke-width="2.200"/><path d="M6.600 12l3 3.500" stroke-width="2.400"/></g><path d="M8.500 12.500h8.800l-1.300 6h-6z" fill="#0a0a0a"/></svg></div><div class="btn" style="left:149.7px;top:608.9px;width:22.5px;height:20.6px;"><svg style="left:-1px;top:-1px" width="24.5" height="22.6" viewBox="0 0 24.5 22.6"><circle cx="11.3" cy="10.8" r="5.700" fill="none" stroke="#0a0a0a" stroke-width="2"/><path d="M15.7 15.2l3.700 3.700" stroke="#0a0a0a" stroke-width="2.700" stroke-linecap="round"/><path d="M8.3 10.8h6" stroke="#0a0a0a" stroke-width="1.800"/></svg></div><div class="btn" style="left:177.3px;top:608.9px;width:21.9px;height:20.6px;"><svg style="left:-1px;top:-1px" width="23.9" height="22.6" viewBox="0 0 23.9 22.6"><circle cx="11.3" cy="10.8" r="5.700" fill="none" stroke="#0a0a0a" stroke-width="2"/><path d="M15.7 15.2l3.700 3.700" stroke="#0a0a0a" stroke-width="2.700" stroke-linecap="round"/><path d="M8.3 10.8h6" stroke="#0a0a0a" stroke-width="1.800"/><path d="M11.3 7.8v6" stroke="#0a0a0a" stroke-width="1.800"/></svg></div><div class="btn" style="left:210.7px;top:608.9px;width:22.0px;height:20.6px;"><svg style="left:-1px;top:-1px" width="24.0" height="22.6" viewBox="0 0 24.0 22.6"><path d="M8.300 6.300Q10.500 3.500 13.800 3.700Q18.300 5 18.300 11.600Q17.800 18.200 12.500 19.200" fill="none" stroke="#0a0a0a" stroke-width="2.200"/><path d="M7.300 5.200l4 .2-1.500 2.600z" fill="#0a0a0a"/><path d="M8.650 8.300L4.700 12.600H7.300Q7.500 17 11.300 18.900L12.200 18.200Q9.800 16 10.100 12.600H11.700Z" fill="#fff" stroke="#0a0a0a" stroke-width=".85" stroke-linejoin="round"/></svg></div><div class="btn" style="left:237.8px;top:608.9px;width:22.2px;height:20.6px;"><svg style="left:-1px;top:-1px" width="24.2" height="22.6" viewBox="0 0 24.2 22.6"><g transform="rotate(180 12.450 11.600)"><path d="M8.300 6.300Q10.500 3.500 13.800 3.700Q18.300 5 18.300 11.600Q17.800 18.200 12.500 19.200" fill="none" stroke="#0a0a0a" stroke-width="2.200"/><path d="M7.300 5.200l4 .2-1.500 2.600z" fill="#0a0a0a"/><path d="M8.650 8.300L4.700 12.600H7.300Q7.500 17 11.300 18.900L12.200 18.200Q9.800 16 10.100 12.600H11.700Z" fill="#fff" stroke="#0a0a0a" stroke-width=".85" stroke-linejoin="round"/></g></svg></div><div class="btn" style="left:271.7px;top:608.9px;width:21.7px;height:20.6px;"><svg style="left:-1px;top:-1px" width="23.7" height="22.6" viewBox="0 0 23.7 22.6"><path d="M6.700 15.500Q3.500 12 5.500 8.500Q8 5.500 12.500 5.600Q17.500 6 19.200 9.500Q19.800 10.800 19.400 12" fill="none" stroke="#0a0a0a" stroke-width="2.200"/><path d="M5.500 13.500l2.600 1-1.700 2.300z" fill="#0a0a0a"/><path d="M8.800 14.800L12.700 12.200V13.900Q17 14 19 11.600L19.700 12.500Q18 16.500 12.700 16.700V18.400Z" fill="#fff" stroke="#0a0a0a" stroke-width=".85" stroke-linejoin="round"/></svg></div><div class="btn" style="left:298.8px;top:608.9px;width:21.9px;height:20.6px;"><svg style="left:-1px;top:-1px" width="23.9" height="22.6" viewBox="0 0 23.9 22.6"><g transform="translate(24 0) scale(-1 1)"><path d="M6.700 15.500Q3.500 12 5.500 8.500Q8 5.500 12.500 5.600Q17.500 6 19.200 9.500Q19.800 10.800 19.400 12" fill="none" stroke="#0a0a0a" stroke-width="2.200"/><path d="M5.500 13.500l2.600 1-1.700 2.300z" fill="#0a0a0a"/><path d="M8.800 14.800L12.700 12.200V13.900Q17 14 19 11.600L19.700 12.500Q18 16.500 12.700 16.700V18.400Z" fill="#fff" stroke="#0a0a0a" stroke-width=".85" stroke-linejoin="round"/></g></svg></div><div class="btn" style="left:332.5px;top:608.9px;width:22.1px;height:20.6px;"><svg style="left:-1px;top:-1px" width="24.1" height="22.6" viewBox="0 0 24.1 22.6"><path d="M9.700 13.600q-2.100-1.800-2.100-4.400 0-4.200 4.400-4.200t4.400 4.200q0 2.600-2.100 4.400z" fill="none" stroke="#0a0a0a" stroke-width="1.400"/><path d="M9.900 13.500h4.200v3.800q-2.100 1.700-4.200 0z" fill="none" stroke="#0a0a0a" stroke-width="1.300"/><path d="M9.900 15.300h4.200" stroke="#0a0a0a" stroke-width="1"/></svg></div><div class="btn" style="left:366.2px;top:608.9px;width:22.8px;height:20.6px;"><svg style="left:-1px;top:-1px" width="24.8" height="22.6" viewBox="0 0 24.8 22.6"><path d="M12.1 5.5l6.600 6.200h-1.900v5.400h-3.300v-3.600h-2.800v3.600h-3.300v-5.400h-1.900z" fill="#0a0a0a"/></svg></div><div class="btn" style="left:752.9px;top:608.9px;width:92.5px;height:20.6px"><svg style="left:-1px;top:-1px" width="94.5" height="22.6" viewBox="0 0 94.5 22.6"><g fill="none" stroke="#0a0a0a" stroke-linejoin="round"><path d="M16.600 4.500l6.800 2.800v7.500l-6.800 3.600-6.800-3.600V7.300z" stroke-width="1.050"/><path d="M16.600 4.500v8" stroke-width=".9"/></g><path d="M9.800 14.800l6.800-2.500 6.800 2.500-6.800 3.600z" fill="#0a0a0a"/></svg><span style="left:28.7px;line-height:21.2px">Убрать стены</span></div><div class="btn" style="left:852.1px;top:608.9px;width:92.2px;height:20.6px"><svg style="left:-1px;top:-1px" width="94.2" height="22.6" viewBox="0 0 94.2 22.6"><rect x="12.300" y="7.700" width="11.200" height="9.200" rx=".8" fill="#0a0a0a"/><path d="M24.300 11l3.700-2.800v8.200l-3.700-2.800z" fill="#0a0a0a"/></svg><span style="left:31.9px;line-height:21.2px;letter-spacing:-.12px">Вид изнутри</span></div>
<div id="right"></div><div class="tab act" style="left:953px;width:80.500px">Проект</div><div class="tab" style="left:1033px;width:77.500px">Этажи</div><div class="tab" style="left:1110px;width:77px">Свойства</div><div class="hdr" style="top:121.500px"><span>Дизайн</span></div><div class="pb" style="left:961.5px;top:147.5px"><svg viewBox="0 0 30 30"><path d="M12.500 14l-2-7.500q-.8-3 .3-4.500 1.500 2 1.700 4.500l1.500 7z" fill="#8a8a8a"/><path d="M15.800 14l1-8q.2-2.500 1.300-3.500.8 2 .2 4l-1 7.500z" fill="#9a9a9a"/><path d="M11 26l4.500-19.500 1.500.4L13 26.500z" fill="#f29a2e"/><path d="M15.500 6.500l1.200-3 .3 3.400z" fill="#e8cfa0"/><path d="M18.500 26l-5.500-18 1.500-.5 6 18z" fill="#f08a1e"/><path d="M13 8l.2-3 1.300 2.500z" fill="#e8cfa0"/><path d="M20.300 7l1-2.800.5 3.200-4.300 17-1.400-.5z" fill="#f5a83a"/><path d="M9 13.500h12v13q-6 2.200-12 0z" fill="#bfe2fa" opacity=".35"/><path d="M9 13.500h12v13q-6 2.200-12 0z" fill="none" stroke="#2f8fdf" stroke-width="1.300"/><ellipse cx="15" cy="13.500" rx="6" ry="1.300" fill="none" stroke="#4da3ea" stroke-width=".9"/></svg><div class="l">Нарисовать<br>комнату</div></div><div class="pb" style="left:1040.200px;top:147.5px"><svg viewBox="0 0 30 30"><path d="M2.500 8.500l9-5.500 16 6.500v11.500l-10.500 6-14.500-6.500z" fill="#c4ad88"/><path d="M2.500 8.500l9-5.500v12l-9 5.500z" fill="#eee2c6"/><path d="M11.500 3l16 6.500v11.500l-16-6z" fill="#f1c72e"/><path d="M11.500 15l16 6-10.500 6-14.500-6.500z" fill="#c2ab86"/><path d="M11.500 3l16 6.500-.1 1.200-15.900-6.400z" fill="#fbe9a0"/><path d="M4.800 9.700l4.400-2.700v4.600l-4.400 2.700z" fill="#4f97e8"/><path d="M7 8.300v4.700M4.800 12l4.400-2.700" stroke="#e8f2fc" stroke-width=".6"/><circle cx="8" cy="21.800" r="5.600" fill="#43c043" stroke="#2d9a2d" stroke-width=".7"/><path d="M8 18.300v7M4.500 21.800h7" stroke="#fff" stroke-width="1.800"/></svg><div class="l">Добавить<br>комнату</div></div><div class="pb" style="left:1119.500px;top:147.5px"><svg viewBox="0 0 30 30"><path d="M3 8l15.500-3 8 3.500v14.500l-7 3.800L3 23z" fill="#c95a4c"/><path d="M19.500 9.500l7-1v14.500l-7 3.800z" fill="#a8443a"/><path d="M3 8l15.500-3 8 3.500-7 1z" fill="#df8579"/><g stroke="#ecbcb4" stroke-width=".8" fill="none"><path d="M3 11.700l16.500 1.500 7-1.200M3 15.400l16.500 2 7-1.800M3 19.200l16.500 2.800 7-2.400"/><path d="M8.500 8.800v3.400M14 9.200v3.600M5.700 12v3.700M11 12.500v3.900M16.500 13v4M8.500 16.100v3.900M14 16.800v4.100M5.700 19.600v3.600M11 20.500v3.700M16.500 21.500v3.800M23 8.800v3.800M21.300 13v4M25 12.300v3.800M23 16.800v4M21.300 21.500v4M25 20v3.500"/></g></svg><div class="l">Нарисовать<br>перегородку</div></div><div class="pb" style="left:961.5px;top:214px"><svg viewBox="0 0 30 30"><path d="M7 16q-2-11 8.500-12 9.500.5 8.500 10l-1.500 6h-14z" fill="#5ea6ee"/><path d="M9 15q-1.500-8.500 6.500-9.300 7 .5 6.500 8l-1 4h-11z" fill="#8cc3f6"/><path d="M5.500 13.500q2.500-.8 3 1.500v8h-3z" fill="#f2b43c"/><path d="M22.500 13.500q2.500-.8 2.500 1.500l-.5 8h-3z" fill="#4f97e4"/><path d="M8.500 16.500h13.500v6h-13.500z" fill="#79b7f3"/><path d="M5.500 21.500h19l-.5 3h-18z" fill="#4a8fdf"/><path d="M6 24.500h1.800v3h-1.800zM21.700 24.500h1.800v3h-1.800zM12 24.500h1.500v2h-1.500z" fill="#eea03a"/><path d="M22.500 13.500q1.800-.6 2.500 1.500l-.3 1.500q-1-1.500-2.500-1z" fill="#f2b43c"/></svg><div class="l">Добавить<br>мебель</div></div><div class="pb" style="left:1040.200px;top:214px"><svg viewBox="0 0 30 30"><defs><linearGradient id="gD" x1="0" y1="0" x2="1" y2="1"><stop offset="0" stop-color="#fff27a"/><stop offset=".5" stop-color="#c8e66a"/><stop offset="1" stop-color="#58b848"/></linearGradient></defs><rect x="5.500" y="2.800" width="19.200" height="24.800" fill="#ef8a1e"/><rect x="7.300" y="4.600" width="15.600" height="23" fill="url(#gD)"/><path d="M12.500 7.500l10.400-2.900v23l-10.400-2z" fill="#d08a4a" stroke="#a0602a" stroke-width=".6"/><path d="M14 10l4-.9v5.500l-4 .5zM14 17.500l4-.3v6l-4-.6z" fill="#b8743a" opacity=".7"/><circle cx="14" cy="16.500" r=".9" fill="#5a3a1a"/></svg><div class="l">Добавить<br>дверь</div></div><div class="pb" style="left:1119.500px;top:214px"><svg viewBox="0 0 30 30"><rect x="3.500" y="3.200" width="22.500" height="21.800" rx="1.200" fill="#dfe3e8" stroke="#b4bac2" stroke-width=".8"/><rect x="5.800" y="5.500" width="8" height="5.500" fill="#1fa6e6"/><rect x="5.800" y="12.300" width="8" height="10.500" fill="#1fa6e6"/><rect x="15.300" y="5.500" width="8.500" height="17.300" fill="#1fa6e6"/><path d="M5.800 5.500h8v2.500h-8zM15.300 5.500h8.500v2.500h-8.500z" fill="#4dbcf0"/><rect x="2.800" y="24.500" width="24" height="2.300" rx=".6" fill="#cfd4da"/></svg><div class="l">Добавить<br>окно</div></div><div class="pb" style="left:961.5px;top:281.200px"><svg viewBox="0 0 30 30"><path d="M15.500 3.200v6" stroke="#7a7a7a" stroke-width="1.300"/><path d="M13 11.500q0-3 2.500-3t2.500 3z" fill="#9a9a9a"/><path d="M4.500 20.800q1-9.500 11-10 10 .5 11 10z" fill="#ee5a5a"/><path d="M7 19q2-7 8.500-7.500-5 2-6 7.500z" fill="#f58a8a"/><path d="M4.500 20.300h22v1.400h-22z" fill="#c44040"/><path d="M12.500 21.800q3 3.800 6 0z" fill="#ffe9a0" stroke="#e6b84a" stroke-width=".5"/><path d="M15.500 25.500v2.600M10.800 24.300l-1.800 2M20.200 24.300l1.800 2" stroke="#3a3a3a" stroke-width="1.100"/></svg><div class="l">Светильники<br>и люстры</div></div><div class="pb" style="left:1040.200px;top:281.200px"><svg viewBox="0 0 30 30"><g fill="#d4661e"><rect x="18" y="11.800" width="8" height="3.200"/><rect x="14.200" y="15.600" width="11.800" height="3.200"/><rect x="10.500" y="19.400" width="15.500" height="3.200"/><rect x="7.300" y="23.200" width="18.700" height="3.700"/></g><g fill="#f2a868"><rect x="18" y="11.200" width="8" height="1"/><rect x="14.200" y="15" width="11.800" height="1"/><rect x="10.500" y="18.800" width="15.500" height="1"/><rect x="7.300" y="22.600" width="18.700" height="1"/></g><path d="M4.500 26V18.500L19 5.700V11.500" fill="none" stroke="#2a2a2a" stroke-width="1.200"/></svg><div class="l">Лестницы<br>и вырезы</div></div><div class="pb" style="left:1119.500px;top:281.200px"><svg viewBox="0 0 30 30"><rect x="4.500" y="4.700" width="20" height="2.600" fill="#dcdcdc" stroke="#a8a8a8" stroke-width=".5"/><path d="M3.500 8h22q1 6.500-3.500 7.500h-15q-4.500-1-3.500-7.500z" fill="#e9e9e9" stroke="#a8a8a8" stroke-width=".6"/><circle cx="7.300" cy="11" r="2.300" fill="#f6f6f6" stroke="#8a8a8a" stroke-width=".8"/><circle cx="21.700" cy="11" r="2.300" fill="#f6f6f6" stroke="#8a8a8a" stroke-width=".8"/><circle cx="7.300" cy="11" r=".8" fill="#8a8a8a"/><circle cx="21.700" cy="11" r=".8" fill="#8a8a8a"/><path d="M11 9.500q3.500 3 7 0M12.500 13l2-3.500 2 3.500" fill="none" stroke="#8f8f8f" stroke-width=".8"/><rect x="8.500" y="15.500" width="12" height="11" fill="#ededed"/><path d="M10.300 15.500v11M12.600 15.500v11M14.900 15.500v11M17.200 15.500v11M19.300 15.500v11" stroke="#b0b0b0" stroke-width=".9"/><rect x="7.500" y="25.800" width="14" height="1.600" fill="#cfcfcf"/></svg><div class="l">Добавить<br>колонну</div></div><div class="hdr" style="top:348.500px;height:19.500px"><span>Список объектов</span><span style="left:168.500px;font-weight:normal;font-size:8.600px">Вид списка</span><svg class="abs" style="left:218.500px;top:3.500px" width="13" height="13" viewBox="0 0 13 13"><rect x=".5" y=".5" width="12" height="12" fill="#f4f8fc" stroke="#8a9bb0" stroke-width=".8"/><path d="M3 2.500v8M3 3.500h1.500M3 6.500h1.500M3 9.500h1.500" stroke="#5a6b80" stroke-width=".7" fill="none"/><path d="M5.500 3.500h5M5.500 6.500h5M5.500 9.500h5" stroke="#3a7bd0" stroke-width="1.300"/></svg></div><div id="list"><svg class="abs" style="left:5px;top:4px" width="24" height="22" viewBox="0 0 24 22"><path d="M.6 7.650L12.500 .8L21.500 5.450L21.250 10.900L10.500 19.300L1 14.500Z" fill="#f3f3f3"/><path d="M.6 7.650L12.500 .8L12.500 7L15.100 9.200L10.500 12.900Z" fill="#ededed"/><path d="M12.500 .8L21.500 5.450L15.100 9.200L12.500 7Z" fill="#5a5a5a"/><path d="M.6 7.650L10.500 12.900L10.500 19.300L1 14.500Z" fill="#555"/><path d="M.6 7.650L12.500 .8L21.500 5.450" fill="none" stroke="#bdbdbd" stroke-width=".5"/></svg>
<div class="abs" style="left:32px;top:4.300px;font-size:9.700px;line-height:11px;color:#333">Комната</div>
<div class="abs" style="left:32px;top:17px;font-size:8.800px;line-height:11px;color:#555;letter-spacing:.1px">820.9 x 419.2</div>
<svg class="abs" style="left:215px;top:12.500px" width="14" height="9" viewBox="0 0 14 9"><path d="M.5 4.500q6.500-7.500 13 0-6.500 6.500-13 0z" fill="#fff" stroke="#b8a23a" stroke-width="1"/><circle cx="7" cy="4.300" r="2.800" fill="#3f7d2a"/><circle cx="7" cy="4.300" r="1.200" fill="#122"/></svg>
<div class="abs" style="left:0;top:31px;width:100%;height:1px;background:#ececec"></div></div>
</body></html>
